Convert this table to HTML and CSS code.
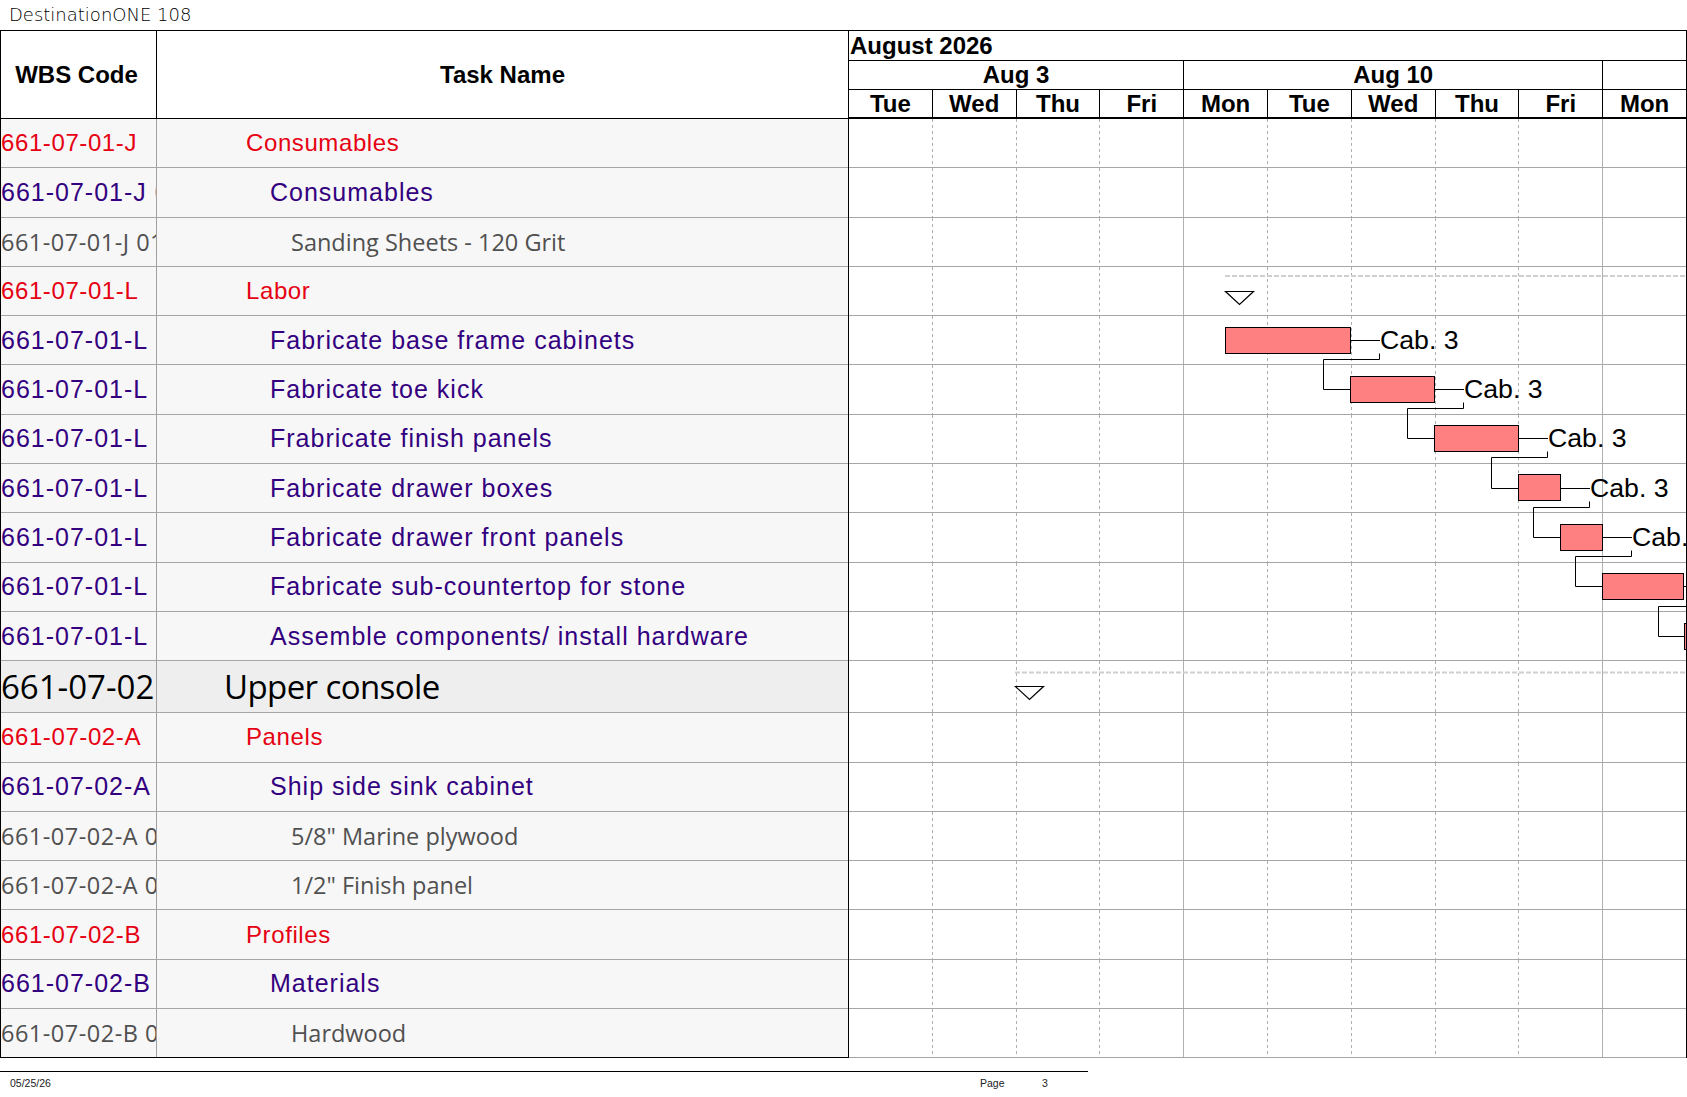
FILE: index.html
```html
<!DOCTYPE html>
<html lang="en">
<head>
<meta charset="utf-8">
<title>DestinationONE 108</title>
<link rel="stylesheet" href="styles.css">
</head>
<body>
<div class="title">DestinationONE 108</div>
<div class="sheet">
  <div class="head">
    <div class="h-wbs">WBS Code</div>
    <div class="h-task">Task Name</div>
    <div class="h-chart">
      <div class="h-month">August 2026</div>
      <div class="h-weeks">
        <div class="wk w4">Aug 3</div>
        <div class="wk w5">Aug 10</div>
        <div class="wk w1"></div>
      </div>
      <div class="h-days">
        <div class="day">Tue</div>
        <div class="day">Wed</div>
        <div class="day">Thu</div>
        <div class="day">Fri</div>
        <div class="day">Mon</div>
        <div class="day">Tue</div>
        <div class="day">Wed</div>
        <div class="day">Thu</div>
        <div class="day">Fri</div>
        <div class="day">Mon</div>
      </div>
    </div>
  </div>

  <div class="body">
    <div class="tbl">
      <div class="row lv1"><div class="wbs">661-07-01-J</div><div class="task">Consumables</div></div>
      <div class="row lv2"><div class="wbs">661-07-01-J 01</div><div class="task">Consumables</div></div>
      <div class="row lv3"><div class="wbs">661-07-01-J 01</div><div class="task">Sanding Sheets - 120 Grit</div></div>
      <div class="row lv1"><div class="wbs">661-07-01-L</div><div class="task">Labor</div></div>
      <div class="row lv2"><div class="wbs">661-07-01-L</div><div class="task">Fabricate base frame cabinets</div></div>
      <div class="row lv2"><div class="wbs">661-07-01-L</div><div class="task">Fabricate toe kick</div></div>
      <div class="row lv2"><div class="wbs">661-07-01-L</div><div class="task">Frabricate finish panels</div></div>
      <div class="row lv2"><div class="wbs">661-07-01-L</div><div class="task">Fabricate drawer boxes</div></div>
      <div class="row lv2"><div class="wbs">661-07-01-L</div><div class="task">Fabricate drawer front panels</div></div>
      <div class="row lv2"><div class="wbs">661-07-01-L</div><div class="task">Fabricate sub-countertop for stone</div></div>
      <div class="row lv2"><div class="wbs">661-07-01-L</div><div class="task">Assemble components/ install hardware</div></div>
      <div class="row lv0"><div class="wbs">661-07-02</div><div class="task">Upper console</div></div>
      <div class="row lv1"><div class="wbs">661-07-02-A</div><div class="task">Panels</div></div>
      <div class="row lv2"><div class="wbs">661-07-02-A</div><div class="task">Ship side sink cabinet</div></div>
      <div class="row lv3"><div class="wbs">661-07-02-A 01</div><div class="task">5/8" Marine plywood</div></div>
      <div class="row lv3"><div class="wbs">661-07-02-A 02</div><div class="task">1/2" Finish panel</div></div>
      <div class="row lv1"><div class="wbs">661-07-02-B</div><div class="task">Profiles</div></div>
      <div class="row lv2"><div class="wbs">661-07-02-B</div><div class="task">Materials</div></div>
      <div class="row lv3"><div class="wbs">661-07-02-B 01</div><div class="task">Hardwood</div></div>
    </div>

    <div class="chart">
      <div class="crow"></div>
      <div class="crow"></div>
      <div class="crow"></div>
      <div class="crow"></div>
      <div class="crow"></div>
      <div class="crow"></div>
      <div class="crow"></div>
      <div class="crow"></div>
      <div class="crow"></div>
      <div class="crow"></div>
      <div class="crow"></div>
      <div class="crow big"></div>
      <div class="crow"></div>
      <div class="crow"></div>
      <div class="crow"></div>
      <div class="crow"></div>
      <div class="crow"></div>
      <div class="crow"></div>
      <div class="crow"></div>

      <svg class="overlay" width="837" height="940" viewBox="0 0 837 940" xmlns="http://www.w3.org/2000/svg">
        <!-- summary: Labor -->
        <path class="sum-line" d="M376 157 H837"/>
        <polygon class="sum-tri" points="376.5,172.5 404.5,172.5 390.5,185.5"/>
        <!-- summary: Upper console -->
        <path class="sum-line" d="M166 553.5 H837"/>
        <polygon class="sum-tri" points="166.5,567.5 194.5,567.5 180.5,580.5"/>

        <!-- links -->
        <path class="link" d="M501.5 221.5 H531 M530.5 234.5 V240.5 H474.5 V270.5 H501.5"/>
        <path class="link" d="M585.5 270.5 H615 M614.5 283.5 V289.5 H558.5 V319.5 H585.5"/>
        <path class="link" d="M669.5 319.5 H699 M698.5 332.5 V338.5 H642.5 V369.5 H669.5"/>
        <path class="link" d="M711.5 369.5 H741 M740.5 382.5 V388.5 H684.5 V418.5 H711.5"/>
        <path class="link" d="M753.5 418.5 H783 M782.5 431.5 V437.5 H726.5 V467.5 H753.5"/>
        <path class="link" d="M834 467.5 H864 M809.5 487.5 H837 M809.5 487.5 V517.5 H837"/>

        <!-- bars -->
        <rect class="bar" x="376.5" y="208.5" width="125" height="26"/>
        <rect class="bar" x="501.5" y="257.5" width="84" height="26"/>
        <rect class="bar" x="585.5" y="306.5" width="84" height="26"/>
        <rect class="bar" x="669.5" y="355.5" width="42" height="26"/>
        <rect class="bar" x="711.5" y="405.5" width="42" height="26"/>
        <rect class="bar" x="753.5" y="454.5" width="81" height="26"/>
        <rect class="bar" x="835.5" y="504.5" width="84" height="26"/>

        <!-- labels -->
        <text class="lbl" x="531" y="230">Cab. 3</text>
        <text class="lbl" x="615" y="279">Cab. 3</text>
        <text class="lbl" x="699" y="328">Cab. 3</text>
        <text class="lbl" x="741" y="377.5">Cab. 3</text>
        <text class="lbl" x="783" y="426.5">Cab. 3</text>
      </svg>
    </div>
  </div>

  <div class="footer">
    <div class="f-date">05/25/26</div>
    <div class="f-page">Page</div>
    <div class="f-num">3</div>
  </div>
</div>
</body>
</html>
```

FILE: styles.css
```css
* {
  box-sizing: border-box;
}

html,
body {
  margin: 0;
  padding: 0;
  background: #ffffff;
}

body {
  width: 1687px;
  height: 1097px;
  overflow: hidden;
  font-family: "Liberation Sans", Arial, sans-serif;
  color: #000;
}

/* ---------- title ---------- */
.title {
  height: 30px;
  line-height: 30px;
  padding-left: 9px;
  font-family: "DejaVu Sans", sans-serif;
  font-weight: 200;
  font-size: 18px;
  color: #000;
  white-space: nowrap;
}

.sheet {
  width: 1687px;
}

/* ---------- header ---------- */
.head {
  display: flex;
  height: 89px;
  border-top: 1px solid #000;
}

.h-wbs,
.h-task {
  display: flex;
  align-items: center;
  justify-content: center;
  font-weight: bold;
  font-size: 24px;
  border-bottom: 1px solid #000;
  background: #fff;
}

.h-wbs {
  width: 157px;
  border-left: 1px solid #000;
  border-right: 1px solid #000;
  padding-right: 4px;
}

.h-task {
  width: 691px;
}

.h-chart {
  width: 839px;
  border-left: 1px solid #000;
  border-right: 1px solid #000;
  display: flex;
  flex-direction: column;
  font-weight: bold;
  font-size: 24px;
}

.h-month {
  height: 30px;
  line-height: 29px;
  padding-left: 1px;
  font-size: 24px;
  border-bottom: 1px solid #000;
  white-space: nowrap;
}

.h-weeks {
  display: flex;
  height: 29px;
  border-bottom: 1px solid #000;
}

.wk {
  display: flex;
  align-items: center;
  justify-content: center;
  white-space: nowrap;
}

.w4 {
  width: 334.2px;
}

.w5 {
  width: 419px;
  border-left: 1px solid #000;
}

.w1 {
  width: 83.8px;
  border-left: 1px solid #000;
}

.h-days {
  display: flex;
  height: 29px;
  border-bottom: 2px solid #000;
}

.day {
  width: 83.8px;
  border-left: 1px solid #000;
  display: flex;
  align-items: center;
  justify-content: center;
}

.day:first-child {
  width: 82.8px;
  border-left: none;
}

/* ---------- body ---------- */
.body {
  display: flex;
}

.tbl {
  width: 848px;
  border-left: 1px solid #000;
}

.row {
  display: flex;
  height: 49.3px;
  border-bottom: 1px solid #a6a6a6;
  background: #f7f7f7;
  white-space: nowrap;
}

.row:last-child {
  border-bottom-color: #000;
}

.wbs {
  width: 156px;
  border-right: 1px solid #a0a0a0;
  overflow: hidden;
  display: flex;
  align-items: center;
}

.task {
  flex: 1;
  overflow: hidden;
  display: flex;
  align-items: center;
}

.lv1 {
  font-size: 24px;
  letter-spacing: 0.6px;
  color: #e60012;
}

.lv1 .task {
  padding-left: 89px;
}

.lv2 {
  font-size: 25px;
  letter-spacing: 1px;
  color: #330080;
}

.lv2 .task {
  padding-left: 113px;
}

.lv3 {
  font-family: "Open Sans", "Noto Sans", sans-serif;
  font-size: 23.5px;
  color: #505050;
}

.lv3 .wbs {
  letter-spacing: 0.5px;
}

.lv3 .task {
  padding-left: 134px;
}

.lv0 {
  height: 52px;
  background: #eeeeee;
  font-family: "Open Sans", "Noto Sans", sans-serif;
  font-size: 33px;
  color: #000;
}

.lv0 .wbs {
  letter-spacing: 0;
}

.lv0 .task {
  padding-left: 67px;
  letter-spacing: -0.6px;
}

/* ---------- chart ---------- */
.chart {
  position: relative;
  width: 839px;
  border-left: 1px solid #000;
  border-right: 1px solid #000;
}

.crow {
  height: 49.3px;
  border-bottom: 1px solid #a6a6a6;
  background-color: #fff;
  background-image:
    linear-gradient(#b0b0b0 50%, transparent 50%),
    linear-gradient(#b0b0b0 50%, transparent 50%),
    linear-gradient(#b0b0b0 50%, transparent 50%),
    linear-gradient(#b0b0b0, #b0b0b0),
    linear-gradient(#b0b0b0 50%, transparent 50%),
    linear-gradient(#b0b0b0 50%, transparent 50%),
    linear-gradient(#b0b0b0 50%, transparent 50%),
    linear-gradient(#b0b0b0 50%, transparent 50%),
    linear-gradient(#b0b0b0, #b0b0b0);
  background-size:
    1px 6px, 1px 6px, 1px 6px, 1px 100%,
    1px 6px, 1px 6px, 1px 6px, 1px 6px, 1px 100%;
  background-position:
    82.8px 0, 166.6px 0, 250.4px 0, 334.2px 0,
    418px 0, 501.8px 0, 585.6px 0, 669.4px 0, 753.2px 0;
  background-repeat:
    repeat-y, repeat-y, repeat-y, no-repeat,
    repeat-y, repeat-y, repeat-y, repeat-y, no-repeat;
}

.crow.big {
  height: 52px;
}

.crow:last-child {
  border-bottom-color: #000;
}

.overlay {
  position: absolute;
  left: 0;
  top: 0;
  width: 837px;
  height: 940px;
  overflow: hidden;
}

.sum-line {
  fill: none;
  stroke: #cfcfcf;
  stroke-width: 2;
  stroke-dasharray: 5 2;
}

.sum-tri {
  fill: #fff;
  stroke: #000;
  stroke-width: 1.2;
}

.link {
  fill: none;
  stroke: #000;
  stroke-width: 1;
}

.bar {
  fill: #ff8080;
  stroke: #000;
  stroke-width: 1;
}

.lbl {
  font-family: "Liberation Sans", Arial, sans-serif;
  font-size: 26.7px;
  fill: #000;
}

/* ---------- footer ---------- */
.footer {
  display: flex;
  width: 1088px;
  margin-top: 12.6px;
  border-top: 1px solid #000;
  padding-top: 5px;
  font-size: 10.5px;
  color: #222;
  white-space: nowrap;
}

.f-date {
  width: 980px;
  padding-left: 10px;
}

.f-page {
  width: 62px;
}
```
